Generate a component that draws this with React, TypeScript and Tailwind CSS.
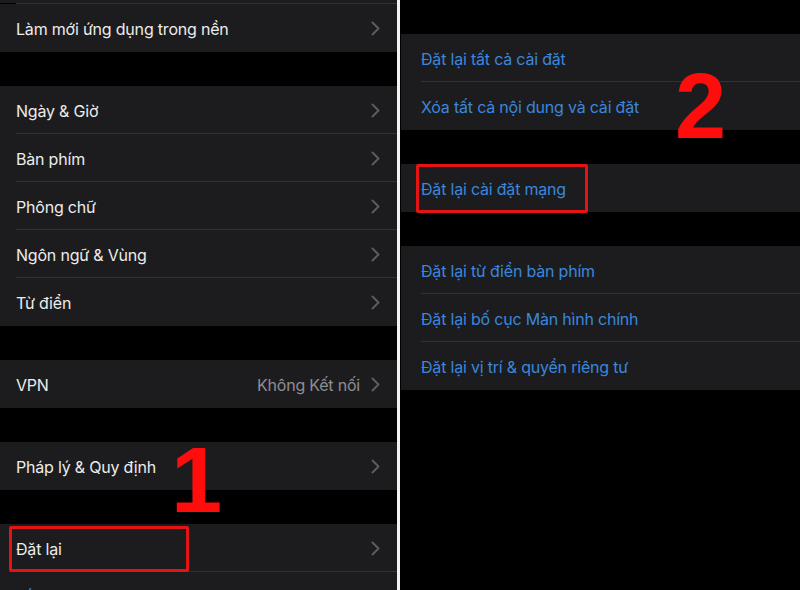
import React from 'react';

const font = { fontFamily: 'Inter, "Noto Sans", "Liberation Sans", sans-serif' };

const Chevron: React.FC = () => (
  <svg width="9" height="15" viewBox="0 0 9 15" className="shrink-0">
    <polyline points="1.5,1.5 7.5,7.5 1.5,13.5" fill="none" stroke="#5c5c60" strokeWidth="2" strokeLinecap="round" strokeLinejoin="round" />
  </svg>
);

interface RowProps {
  label: string;
  value?: string;
  last?: boolean;
  boxed?: boolean;
}

// left side: white labels, chevrons, separators inset 16px
const LeftRow: React.FC<RowProps> = ({ label, value, last, boxed }) => (
  <div className="relative h-[48px] bg-[#1c1c1e]">
    <div className="h-full flex items-center pl-4 pr-[17px] pt-px">
      <span className="flex-1 text-[16px] tracking-[-0.2px] text-[#ececec]">{label}</span>
      {value && <span className="text-[16px] tracking-[-0.2px] text-[#8e8e93] mr-[11px]">{value}</span>}
      <Chevron />
    </div>
    {!last && <div className="absolute bottom-0 left-4 right-0 h-px bg-[#323234]"></div>}
    {boxed && <div className="absolute left-[9px] top-[2px] w-[180px] h-[46px] border-[3px] border-[#e41414] rounded-[2px]"></div>}
  </div>
);

const Group: React.FC<{ children: React.ReactNode }> = ({ children }) => (
  <div className="mt-[34px]">{children}</div>
);

const RightRow: React.FC<RowProps> = ({ label, last, boxed }) => (
  <div className="relative h-[48px] bg-[#1c1c1e]">
    <div className="h-full flex items-center pl-5 pt-px">
      <span className="text-[16px] tracking-[-0.2px] text-[#3a87dc]">{label}</span>
    </div>
    {!last && <div className="absolute bottom-0 left-5 right-0 h-px bg-[#323234]"></div>}
    {boxed && <div className="absolute left-[15px] top-0 w-[172px] h-[49px] border-[3px] border-[#e41414] rounded-[2px]"></div>}
  </div>
);

const BigNumber: React.FC<{ n: string; className: string }> = ({ n, className }) => (
  <span
    className={`absolute font-bold text-[#ff0d0d] leading-none text-[92px] ${className}`}
    style={{ fontFamily: '"Liberation Sans", Arial, sans-serif' }}
  >
    {n}
  </span>
);

export default function App() {
  return (
    <div className="relative w-[800px] h-[590px] overflow-hidden bg-black flex" style={font}>
      {/* Left screen */}
      <div className="w-[397px] h-full overflow-hidden">
        <div className="h-[3px] bg-[#1c1c1e]"></div>
        <div className="h-px ml-4 bg-[#323234]"></div>
        <LeftRow label="Làm mới ứng dụng trong nền" last />
        <Group>
          <LeftRow label="Ngày & Giờ" />
          <LeftRow label="Bàn phím" />
          <LeftRow label="Phông chữ" />
          <LeftRow label="Ngôn ngữ & Vùng" />
          <LeftRow label="Từ điển" last />
        </Group>
        <Group>
          <LeftRow label="VPN" value="Không Kết nối" last />
        </Group>
        <Group>
          <LeftRow label="Pháp lý & Quy định" last />
        </Group>
        <Group>
          <LeftRow label="Đặt lại" boxed />
          <div className="h-[48px] bg-[#1c1c1e] flex items-center pl-4 pt-px">
            <span className="text-[16px] tracking-[-0.2px] text-[#3a87dc]">Tắt máy</span>
          </div>
        </Group>
      </div>

      {/* divider */}
      <div className="w-[3px] h-full bg-[#f2f2f2]"></div>

      {/* Right screen */}
      <div className="flex-1 ml-px h-full">
        <Group>
          <RightRow label="Đặt lại tất cả cài đặt" />
          <RightRow label="Xóa tất cả nội dung và cài đặt" last />
        </Group>
        <Group>
          <RightRow label="Đặt lại cài đặt mạng" last boxed />
        </Group>
        <Group>
          <RightRow label="Đặt lại từ điển bàn phím" />
          <RightRow label="Đặt lại bố cục Màn hình chính" />
          <RightRow label="Đặt lại vị trí & quyền riêng tư" last />
        </Group>
      </div>

      <BigNumber n="1" className="left-[171px] top-[434px]" />
      <BigNumber n="2" className="left-[675px] top-[60px]" />
    </div>
  );
}
